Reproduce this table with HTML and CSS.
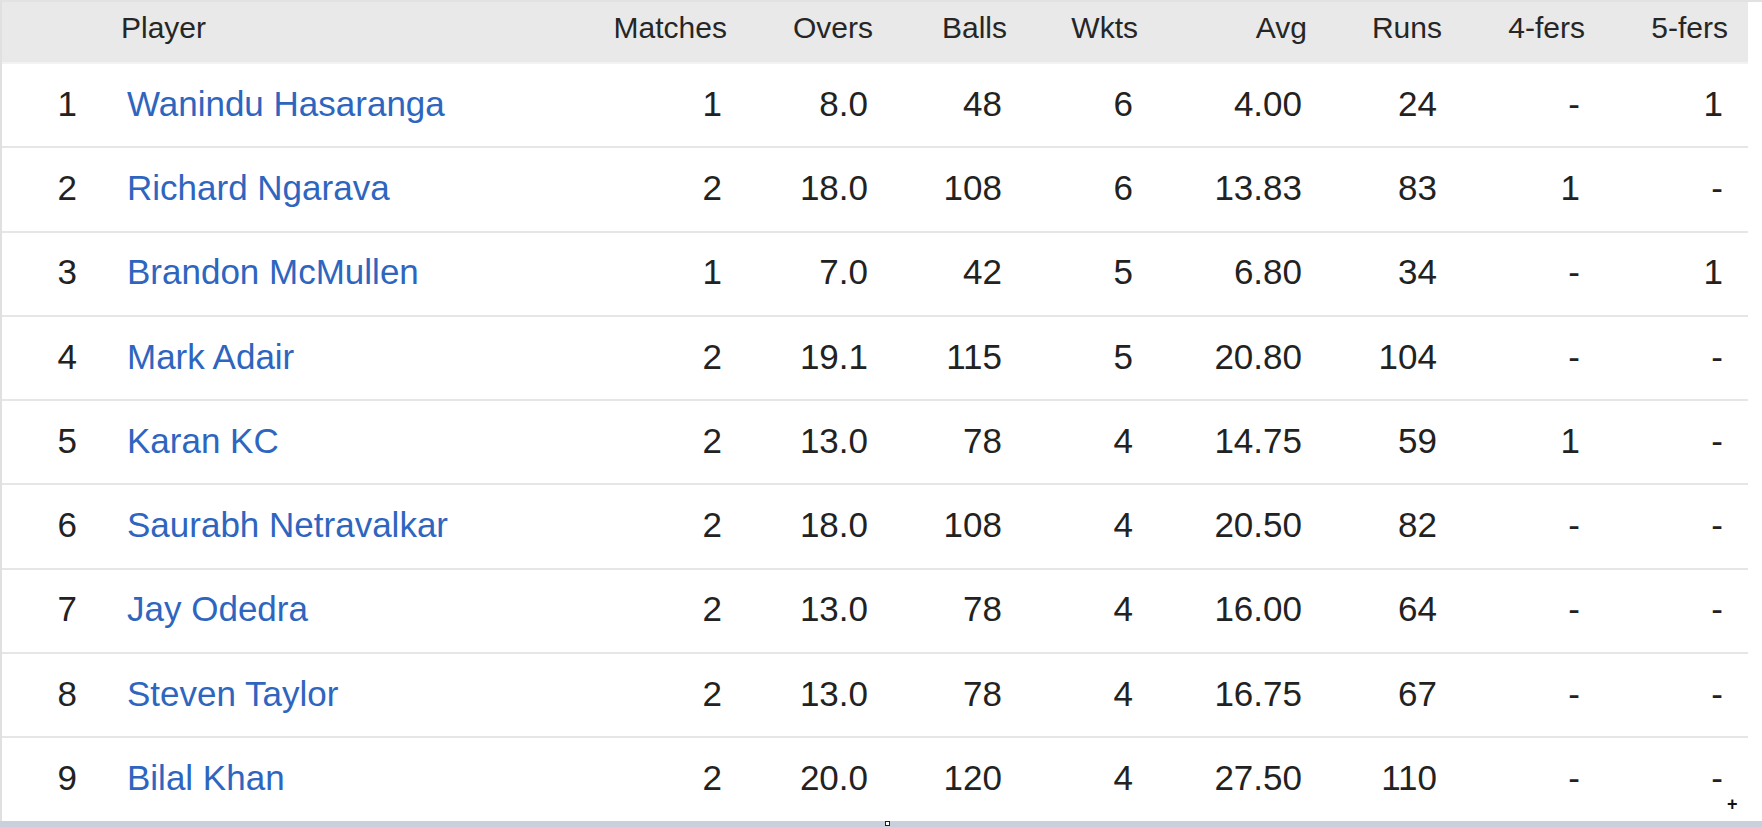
FILE: index.html
```html
<!DOCTYPE html>
<html>
<head>
<meta charset="utf-8">
<link rel="stylesheet" href="styles.css">
</head>
<body>
<div class="frame">
  <table class="stats">
    <colgroup>
      <col class="c-rank"><col class="c-player"><col class="c-matches"><col class="c-overs"><col class="c-balls"><col class="c-wkts"><col class="c-avg"><col class="c-runs"><col class="c-four"><col class="c-five">
    </colgroup>
    <thead>
      <tr>
        <th class="rank"></th>
        <th class="player">Player</th>
        <th class="num">Matches</th>
        <th class="num">Overs</th>
        <th class="num">Balls</th>
        <th class="num">Wkts</th>
        <th class="num">Avg</th>
        <th class="num">Runs</th>
        <th class="num">4-fers</th>
        <th class="num">5-fers</th>
      </tr>
    </thead>
    <tbody>
      <tr><td class="rank">1</td><td class="player"><a href="#">Wanindu Hasaranga</a></td><td class="num">1</td><td class="num">8.0</td><td class="num">48</td><td class="num">6</td><td class="num">4.00</td><td class="num">24</td><td class="num">-</td><td class="num">1</td></tr>
      <tr><td class="rank">2</td><td class="player"><a href="#">Richard Ngarava</a></td><td class="num">2</td><td class="num">18.0</td><td class="num">108</td><td class="num">6</td><td class="num">13.83</td><td class="num">83</td><td class="num">1</td><td class="num">-</td></tr>
      <tr><td class="rank">3</td><td class="player"><a href="#">Brandon McMullen</a></td><td class="num">1</td><td class="num">7.0</td><td class="num">42</td><td class="num">5</td><td class="num">6.80</td><td class="num">34</td><td class="num">-</td><td class="num">1</td></tr>
      <tr><td class="rank">4</td><td class="player"><a href="#">Mark Adair</a></td><td class="num">2</td><td class="num">19.1</td><td class="num">115</td><td class="num">5</td><td class="num">20.80</td><td class="num">104</td><td class="num">-</td><td class="num">-</td></tr>
      <tr><td class="rank">5</td><td class="player"><a href="#">Karan KC</a></td><td class="num">2</td><td class="num">13.0</td><td class="num">78</td><td class="num">4</td><td class="num">14.75</td><td class="num">59</td><td class="num">1</td><td class="num">-</td></tr>
      <tr><td class="rank">6</td><td class="player"><a href="#">Saurabh Netravalkar</a></td><td class="num">2</td><td class="num">18.0</td><td class="num">108</td><td class="num">4</td><td class="num">20.50</td><td class="num">82</td><td class="num">-</td><td class="num">-</td></tr>
      <tr><td class="rank">7</td><td class="player"><a href="#">Jay Odedra</a></td><td class="num">2</td><td class="num">13.0</td><td class="num">78</td><td class="num">4</td><td class="num">16.00</td><td class="num">64</td><td class="num">-</td><td class="num">-</td></tr>
      <tr><td class="rank">8</td><td class="player"><a href="#">Steven Taylor</a></td><td class="num">2</td><td class="num">13.0</td><td class="num">78</td><td class="num">4</td><td class="num">16.75</td><td class="num">67</td><td class="num">-</td><td class="num">-</td></tr>
      <tr><td class="rank">9</td><td class="player"><a href="#">Bilal Khan</a></td><td class="num">2</td><td class="num">20.0</td><td class="num">120</td><td class="num">4</td><td class="num">27.50</td><td class="num">110</td><td class="num">-</td><td class="num">-</td></tr>
    </tbody>
  </table>
  <span class="mark-cross">+</span>
  <span class="mark-square"></span>
</div>
</body>
</html>
```

FILE: styles.css
```css
html, body {
  margin: 0;
  padding: 0;
}
body {
  width: 1762px;
  height: 827px;
  overflow: hidden;
  background: #c8d0db;
  font-family: "Liberation Sans", Arial, sans-serif;
}
.frame {
  position: relative;
  height: 819px;
  background: #ffffff;
  border-top: 2px solid #e2e2e2;
  border-left: 2px solid #e0e0e0;
}
.stats {
  border-collapse: collapse;
  table-layout: fixed;
  width: 1746px;
}
.c-rank { width: 118px; }
.c-player { width: 480px; }
.c-matches { width: 147px; }
.c-overs { width: 146px; }
.c-balls { width: 134px; }
.c-wkts { width: 131px; }
.c-avg { width: 169px; }
.c-runs { width: 135px; }
.c-four { width: 143px; }
.c-five { width: 143px; }

.stats thead tr {
  background: #e9e9e9;
}
.stats th {
  height: 51px;
  padding: 0 20px 9px 0;
  font-size: 30px;
  font-weight: normal;
  color: #262626;
  text-align: right;
  vertical-align: middle;
  border-bottom: 2px solid #f2f2f2;
}
.stats th.player {
  text-align: left;
  padding-left: 1px;
}
.stats td {
  height: 79.3px;
  padding: 0 25px 3px 0;
  font-size: 35px;
  color: #222222;
  text-align: right;
  vertical-align: middle;
  border-bottom: 2px solid #e6e6e6;
  white-space: nowrap;
}
.stats tbody tr:last-child td {
  border-bottom: none;
}
.stats td.rank {
  padding-right: 43px;
}
.stats td.player {
  text-align: left;
  padding-left: 7px;
}
.stats td.player a {
  color: #2e65bf;
  text-decoration: none;
}
.mark-cross {
  position: absolute;
  left: 1725px;
  top: 793px;
  font-size: 18px;
  font-weight: bold;
  color: #111;
  line-height: 18px;
}
.mark-square {
  position: absolute;
  left: 883px;
  top: 819px;
  width: 3px;
  height: 3px;
  border: 1px solid #222;
  background: #fff;
}
```
